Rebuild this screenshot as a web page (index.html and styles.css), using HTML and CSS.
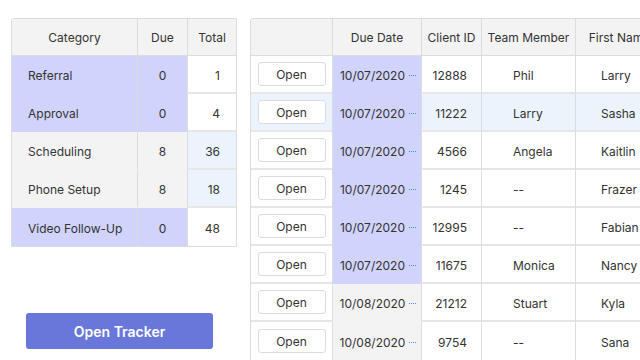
FILE: index.html
```html
<!DOCTYPE html>
<html lang="en">
<head>
  <meta charset="UTF-8">
  <title>Tracker</title>
  <link rel="stylesheet" href="styles.css">
</head>
<body>
  <div class="page">
    <div class="summary">
      <table class="grid summary-table">
        <thead>
          <tr>
            <th class="c-cat">Category</th>
            <th class="c-due">Due</th>
            <th class="c-total">Total</th>
          </tr>
        </thead>
        <tbody>
          <tr>
            <td class="name hl">Referral</td>
            <td class="mid hl">0</td>
            <td class="num">1</td>
          </tr>
          <tr>
            <td class="name hl">Approval</td>
            <td class="mid hl">0</td>
            <td class="num">4</td>
          </tr>
          <tr>
            <td class="name gray">Scheduling</td>
            <td class="mid gray">8</td>
            <td class="num blue">36</td>
          </tr>
          <tr>
            <td class="name gray">Phone Setup</td>
            <td class="mid gray">8</td>
            <td class="num blue">18</td>
          </tr>
          <tr>
            <td class="name hl">Video Follow-Up</td>
            <td class="mid hl">0</td>
            <td class="num">48</td>
          </tr>
        </tbody>
      </table>
      <button class="tracker-btn">Open Tracker</button>
    </div>

    <div class="clients">
      <table class="grid client-table">
        <thead>
          <tr>
            <th class="c-open"></th>
            <th class="c-date">Due Date</th>
            <th class="c-id">Client ID</th>
            <th class="c-team">Team Member</th>
            <th class="c-first">First Name</th>
          </tr>
        </thead>
        <tbody>
          <tr>
            <td class="btn-cell"><button class="open-btn">Open</button></td>
            <td class="date hl">10/07/2020<span class="dots"></span></td>
            <td class="id">12888</td>
            <td class="team">Phil</td>
            <td class="first">Larry</td>
          </tr>
          <tr class="row-blue">
            <td class="btn-cell"><button class="open-btn">Open</button></td>
            <td class="date hl">10/07/2020<span class="dots"></span></td>
            <td class="id">11222</td>
            <td class="team">Larry</td>
            <td class="first">Sasha</td>
          </tr>
          <tr>
            <td class="btn-cell"><button class="open-btn">Open</button></td>
            <td class="date hl">10/07/2020<span class="dots"></span></td>
            <td class="id">4566</td>
            <td class="team">Angela</td>
            <td class="first">Kaitlin</td>
          </tr>
          <tr>
            <td class="btn-cell"><button class="open-btn">Open</button></td>
            <td class="date hl">10/07/2020<span class="dots"></span></td>
            <td class="id">1245</td>
            <td class="team">--</td>
            <td class="first">Frazer</td>
          </tr>
          <tr>
            <td class="btn-cell"><button class="open-btn">Open</button></td>
            <td class="date hl">10/07/2020<span class="dots"></span></td>
            <td class="id">12995</td>
            <td class="team">--</td>
            <td class="first">Fabian</td>
          </tr>
          <tr>
            <td class="btn-cell"><button class="open-btn">Open</button></td>
            <td class="date hl">10/07/2020<span class="dots"></span></td>
            <td class="id">11675</td>
            <td class="team">Monica</td>
            <td class="first">Nancy</td>
          </tr>
          <tr>
            <td class="btn-cell"><button class="open-btn">Open</button></td>
            <td class="date gray">10/08/2020<span class="dots"></span></td>
            <td class="id">21212</td>
            <td class="team">Stuart</td>
            <td class="first">Kyla</td>
          </tr>
          <tr>
            <td class="btn-cell"><button class="open-btn">Open</button></td>
            <td class="date gray">10/08/2020<span class="dots"></span></td>
            <td class="id">9754</td>
            <td class="team">--</td>
            <td class="first">Sana</td>
          </tr>
        </tbody>
      </table>
    </div>
  </div>
</body>
</html>
```

FILE: styles.css
```css
body {
  margin: 0;
  background: #ffffff;
  font-family: Inter, "Liberation Sans", sans-serif;
  color: #333;
  overflow: hidden;
  height: 360px;
}

.page {
  display: flex;
  align-items: flex-start;
  gap: 13px;
  padding: 18px 0 0 11px;
  width: 760px;
}

.summary {
  display: flex;
  flex-direction: column;
  width: 226px;
  flex-shrink: 0;
}

.clients {
  flex-shrink: 0;
}

.grid {
  border-collapse: separate;
  border-spacing: 0;
  border: 1px solid #dcdcdc;
  border-radius: 3px 0 0 0;
  font-size: 12px;
  table-layout: fixed;
}

.grid th,
.grid td {
  box-sizing: border-box;
  padding: 0;
  border-left: 1px solid #dcdcdc;
  white-space: nowrap;
}

.grid th {
  background: #f3f3f3;
  font-weight: 400;
  height: 37px;
  text-align: center;
  border-bottom: 1px solid #dcdcdc;
}

.grid th:first-child {
  border-radius: 3px 0 0 0;
}

.grid td {
  height: 38px;
  padding-top: 2px;
  border-bottom: 2px solid #e6e6e6;
}

.grid th:first-child,
.grid td:first-child {
  border-left: none;
}

.grid tr:last-child td {
  border-bottom: none;
}

.hl {
  background: #d0d4fc;
  border-bottom-color: #d0d4fc !important;
}

.gray {
  background: #f3f3f3;
  border-bottom-color: #f3f3f3 !important;
}

.blue {
  background: #ebf3fd;
}

.summary-table {
  width: 226px;
}

.c-cat { width: 125px; }
.c-due { width: 50px; }
.c-total { width: 49px; }

.name {
  padding-left: 16px !important;
}

.mid {
  text-align: center;
}

.num {
  text-align: right;
  padding-right: 16px !important;
}

.tracker-btn {
  margin: 66px 0 0 15px;
  width: 187px;
  height: 36px;
  border: none;
  border-radius: 3px;
  background: #6877d9;
  color: #fff;
  font-family: Inter, "Liberation Sans", sans-serif;
  font-size: 14px;
  font-weight: 600;
}

.client-table {
  width: 414px;
}

.c-open { width: 81px; }
.c-date { width: 89px; }
.c-id { width: 60px; }
.c-team { width: 94px; }
.c-first { width: 88px; }

.row-blue td {
  background: #ebf3fd;
}

.row-blue td.hl {
  background: #d0d4fc;
}

.grid td.btn-cell {
  text-align: center;
  padding-top: 0;
}

.open-btn {
  width: 68px;
  height: 24px;
  background: #fff;
  border: 1px solid #dcdcdc;
  border-radius: 3px;
  font-family: Inter, "Liberation Sans", sans-serif;
  font-size: 12px;
  color: #333;
  padding: 0;
}

.date {
  text-align: center;
  padding-left: 2px !important;
}

.dots {
  display: inline-block;
  width: 7px;
  margin-left: 4px;
  vertical-align: 4px;
  border-top: 1px dotted #4a90e2;
}

.id {
  text-align: right;
  padding-right: 14px !important;
}

.team {
  padding-left: 31px !important;
}

.first {
  padding-left: 25px !important;
}
```
